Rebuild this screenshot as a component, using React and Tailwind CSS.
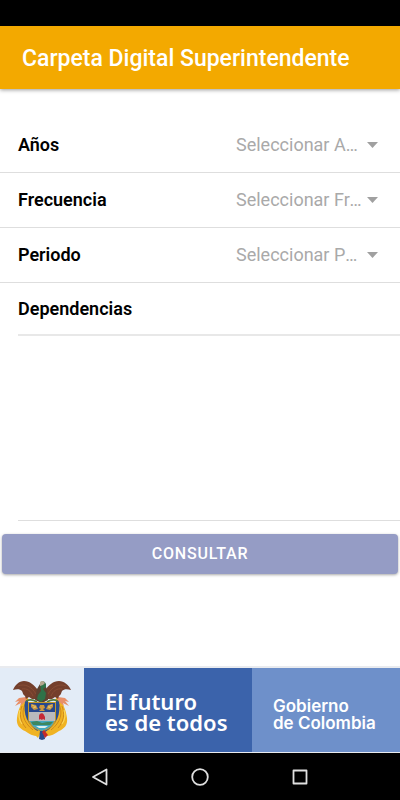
import { useState } from 'react';

const FILTERS = [
  { id: 'anios', label: 'Años', placeholder: 'Seleccionar Años', options: ['2018', '2019', '2020'] },
  { id: 'frecuencia', label: 'Frecuencia', placeholder: 'Seleccionar Frecuencia', options: ['Mensual', 'Trimestral', 'Anual'] },
  { id: 'periodo', label: 'Periodo', placeholder: 'Seleccionar Periodo', options: ['1', '2', '3'] },
];

function FilterRow({ filter, value, onChange }) {
  return (
    <div className="flex h-[54px] items-center border-b border-[#dedede] box-content pl-[18px] pr-[22px]">
      <label htmlFor={filter.id} className="flex-1 text-lg font-semibold leading-6 text-black">
        {filter.label}
      </label>
      <select
        id={filter.id}
        value={value}
        onChange={(e) => onChange(filter.id, e.target.value)}
        className="w-[127px] appearance-none truncate bg-transparent text-lg leading-6 text-[#a9a9a9] outline-none"
      >
        <option value="">{filter.placeholder}</option>
        {filter.options.map((opt) => (
          <option key={opt} value={opt}>{opt}</option>
        ))}
      </select>
      <svg className="ml-1 h-[6px] w-[11px]" viewBox="0 0 11 6" aria-hidden="true">
        <path d="M0 0h11L5.5 6z" fill="#a0a0a0" />
      </svg>
    </div>
  );
}

// Coat of arms: condor, flags and shield
function Escudo() {
  return (
    <svg className="h-[60px] w-[58px]" viewBox="0 0 58 60" role="img" aria-label="Escudo de Colombia">
      {/* flags */}
      <path d="M14 18C8 22 5 30 4 38c-1 7 3 11 8 13 4 3 8 5 13 5l4-6-12-8-2-24z" fill="#f0b323" />
      <path d="M44 18c6 4 9 12 10 20 1 7-3 11-8 13-4 3-8 5-13 5l-4-6 12-8 2-24z" fill="#f0b323" />
      <path d="M9 26c-3 8-2 15 4 22M12 24c-4 9-2 18 8 26M49 26c3 8 2 15-4 22M46 24c4 9 2 18-8 26" fill="none" stroke="#d08a1a" strokeWidth="1" />
      <path d="M7 30c-2 6-1 10 2 14M51 30c2 6 1 10-2 14" fill="none" stroke="#fbd75a" strokeWidth="1.2" />
      <path d="M12 21c-2 13 2 24 14 31l2-3C18 42 15 33 15 21z" fill="#294f91" />
      <path d="M46 21c2 13-2 24-14 31l-2-3c10-7 13-16 13-28z" fill="#294f91" />
      <path d="M15 29c0 8 4 15 13 20l1-3c-8-4-11-9-12-17zM43 29c0 8-4 15-13 20l-1-3c8-4 11-9 12-17z" fill="#c52a29" />
      {/* ribbon */}
      <path d="M13 17l-7 1-4 4 4-1-4 5 6-3-1 3 7-6zM45 17l7 1 4 4-4-1 4 5-6-3 1 3-7-6z" fill="#e88f68" />
      {/* condor */}
      <path d="M25 10C21 5 17 1 11 1 6 1 2 5 0 10c4-1 7-1 9 1 1 2 1 4 3 5l1 3 3-2 3 2 6 0 3-6z" fill="#743f2c" />
      <path d="M32 10c4-5 8-9 14-9 5 0 10 4 12 9-4-1-7-1-9 1-1 2-1 4-3 5l-1 3-3-2-3 2-6 0-3-6z" fill="#743f2c" />
      <path d="M5 6c7-3 14 1 18 8M9 9c5-1 9 2 11 7M53 6c-7-3-14 1-18 8M49 9c-5-1-9 2-11 7" fill="none" stroke="#8c5137" strokeWidth="0.8" />
      <path d="M24 9l3-5 5 0 2 6 1 10-6 3-7-3z" fill="#5d4130" />
      <path d="M27 3c2-3 5-2 6 1l0 3-3 2 3 4-1 6-4 3-4-3 1-4 3-4z" fill="#2f7248" />
      <path d="M27 2c2-2 4-1 5 1l-2 2-3 1z" fill="#b4a68e" />
      <path d="M13 21c4-2 8-1 11 1M45 21c-4-2-8-1-11 1" fill="none" stroke="#557a3c" strokeWidth="1.6" />
      {/* shield */}
      <path d="M15 22h28v17c0 6-5 9-14 13-9-4-14-7-14-13z" fill="#c89a28" />
      <path d="M16 23h26v9H16z" fill="#27488d" />
      <path d="M16 32h26v9H16z" fill="#b9babd" />
      <path d="M17 41h24c-1 4-4 7-12 10-8-3-11-6-12-10z" fill="#45a8c0" />
      <path d="M18 24l5 1 2 4-4 1-3-3zM40 24l-5 1-2 4 4 1 3-3z" fill="#c39445" />
      <path d="M19 25l4 2-3 1M39 25l-4 2 3 1" fill="none" stroke="#e9c261" strokeWidth="1" />
      <path d="M27 25l4 0 1 3-2 1 2 2h-6l2-2-2-1z" fill="#cf983c" />
      <path d="M26 36c0-3 4-4 5-1l1 2v3l-2-1-1 1-2-1-1 1z" fill="#c52a35" />
      <path d="M18 42l6-1 5 2 5-1 6 0-3 3H20z" fill="#3d8760" />
      <path d="M23 46h12l-3 2h-6z" fill="#def0ed" />
      {/* lower knot */}
      <path d="M25 50l-3 5 3 3 3-6z" fill="#f0b323" />
      <path d="M27 51h4l1 8-3 1-3-1z" fill="#294a89" />
      <path d="M31 50l4 5-3 3-3-6z" fill="#c52a29" />
    </svg>
  );
}

export default function App() {
  const [values, setValues] = useState({ anios: '', frecuencia: '', periodo: '' });

  const handleChange = (id, value) => {
    setValues((prev) => ({ ...prev, [id]: value }));
  };

  const ready = Object.values(values).every(Boolean);

  return (
    <div className="flex min-h-screen flex-col bg-white font-[Roboto,sans-serif]">
      {/* Status bar */}
      <div className="h-[26px] bg-black" />

      {/* Toolbar */}
      <header className="flex h-[63px] items-center bg-[#f3a900] px-[22px] pt-[2px] shadow-[0_1px_4px_rgba(0,0,0,0.4)]">
        <h1 className="text-[23px] font-medium leading-7 text-white">Carpeta Digital Superintendente</h1>
      </header>

      <main className="flex flex-1 flex-col pt-[29px]">
        {FILTERS.map((filter) => (
          <FilterRow key={filter.id} filter={filter} value={values[filter.id]} onChange={handleChange} />
        ))}

        {/* Dependencias list */}
        <section className="pl-[18px]">
          <h2 className="flex h-[53px] items-center border-b-2 border-[#e8e8e8] text-lg font-semibold leading-6 text-black">
            Dependencias
          </h2>
          <div className="h-[185px] border-b border-[#dedede]" />
        </section>

        <div className="px-[2px] pt-[13px]">
          <button
            type="button"
            disabled={!ready}
            className="h-10 w-full rounded bg-[#959cc5] text-base font-medium tracking-wider text-white shadow-[0_1px_3px_rgba(0,0,0,0.35)]"
          >
            CONSULTAR
          </button>
        </div>
      </main>

      {/* Government banner */}
      <footer className="flex border-b border-t-2 border-[#e9ebef] bg-[#e3ecf7]">
        <div className="flex h-[84px] w-[21%] items-center justify-center">
          <Escudo />
        </div>
        <div className="flex w-[42%] items-center bg-[#3b63ab] pl-[21px] pt-[3px] font-['Noto_Sans',sans-serif] text-[22px] font-semibold leading-[21px] text-white">
          <p>El futuro<br />es de todos</p>
        </div>
        <div className="flex flex-1 items-center bg-[#6e90ca] pl-[21px] pt-[10px] font-[Inter,sans-serif] text-[17px] font-semibold leading-[17px] text-white">
          <p>Gobierno<br />de Colombia</p>
        </div>
      </footer>

      {/* Android navigation */}
      <nav className="flex h-[47px] items-center justify-center gap-[76px] bg-black">
        <button type="button" aria-label="Atrás">
          <svg className="h-6 w-6" viewBox="0 0 24 24" fill="none" stroke="#e0e0e0" strokeWidth="1.8" strokeLinejoin="round">
            <path d="M18.500 4.500v15L5 12z" />
          </svg>
        </button>
        <button type="button" aria-label="Inicio">
          <svg className="h-6 w-6" viewBox="0 0 24 24" fill="none" stroke="#e0e0e0" strokeWidth="1.8">
            <circle cx="12" cy="12" r="7.800" />
          </svg>
        </button>
        <button type="button" aria-label="Recientes">
          <svg className="h-6 w-6" viewBox="0 0 24 24" fill="none" stroke="#e0e0e0" strokeWidth="1.8" strokeLinejoin="round">
            <path d="M5.500 5.500h13v13h-13z" />
          </svg>
        </button>
      </nav>
    </div>
  );
}
